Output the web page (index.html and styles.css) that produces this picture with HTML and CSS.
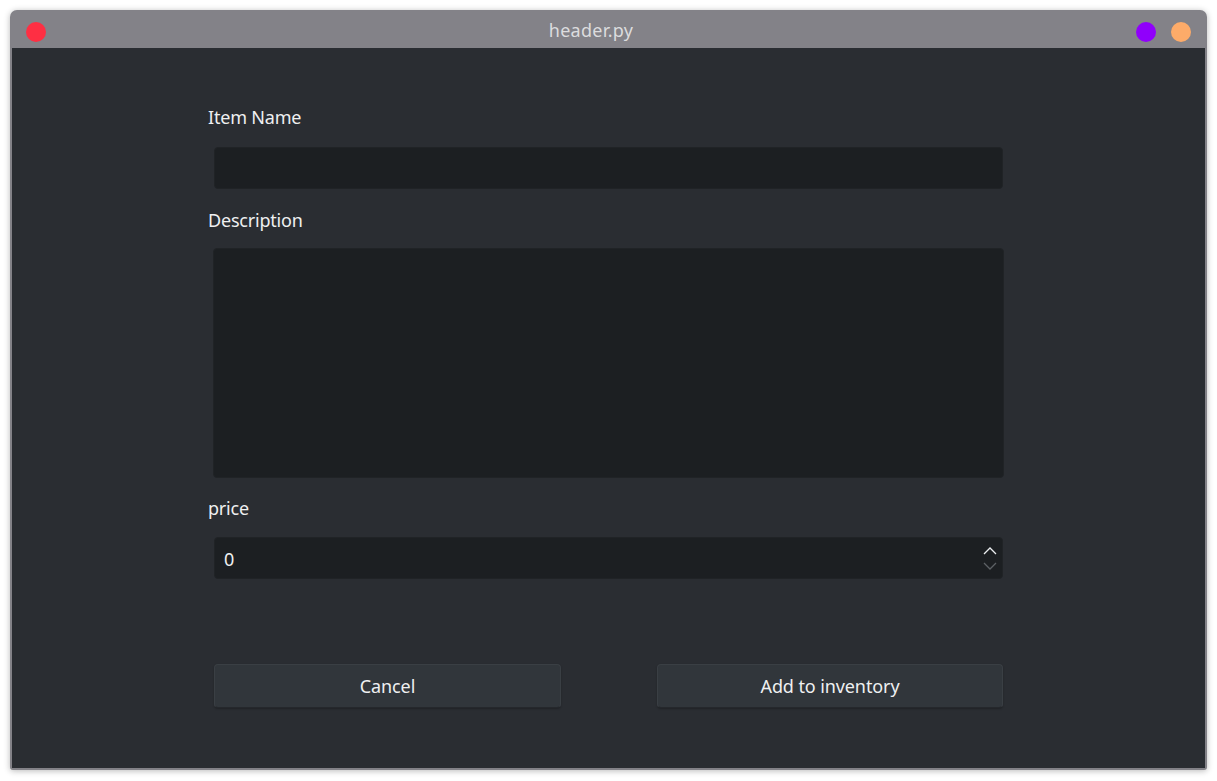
FILE: index.html
```html
<!DOCTYPE html>
<html>
<head>
<meta charset="utf-8">
<link rel="stylesheet" href="styles.css">
</head>
<body>
<div class="window">
  <div class="titlebar">
    <div class="tb-left"><span class="dot red"></span></div>
    <div class="title">header.py</div>
    <div class="tb-right"><span class="dot purple"></span><span class="dot orange"></span></div>
  </div>
  <div class="content">
    <div class="form">
      <label class="label l-name">Item Name</label>
      <div class="field input"></div>
      <label class="label l-desc">Description</label>
      <div class="field textarea"></div>
      <label class="label l-price">price</label>
      <div class="field spin">
        <span class="value">0</span>
        <span class="arrows">
          <svg width="14" height="8" viewBox="0 0 14 8"><path d="M1 7 L7 1 L13 7" fill="none" stroke="#eceff1" stroke-width="1.3"/></svg>
          <svg width="14" height="8" viewBox="0 0 14 8"><path d="M1 1 L7 7 L13 1" fill="none" stroke="#5d6165" stroke-width="1.3"/></svg>
        </span>
      </div>
      <div class="buttons">
        <button class="btn">Cancel</button>
        <button class="btn">Add to inventory</button>
      </div>
    </div>
  </div>
</div>
</body>
</html>
```

FILE: styles.css
```css
html, body {
  margin: 0;
  padding: 0;
  background: #ffffff;
}
body {
  width: 1217px;
  height: 781px;
  font-family: "Noto Sans", "DejaVu Sans", sans-serif;
  overflow: hidden;
}
.window {
  margin: 10px 0 0 10px;
  width: 1197px;
  height: 760px;
  background: #838288;
  border-radius: 7px 7px 3px 3px;
  box-shadow: 0 1px 6px rgba(0,0,0,0.28);
  display: flex;
  flex-direction: column;
}
.titlebar {
  height: 38px;
  display: flex;
  align-items: center;
  flex-shrink: 0;
}
.tb-left {
  width: 50px;
  display: flex;
  padding-left: 16px;
  box-sizing: border-box;
}
.tb-right {
  width: 85px;
  display: flex;
  gap: 15px;
  justify-content: flex-end;
  padding-right: 16px;
  box-sizing: border-box;
}
.title {
  flex: 1;
  text-align: center;
  color: #dcdcde;
  font-size: 18px;
  letter-spacing: 0.3px;
  line-height: 24px;
  padding-top: 1px;
}
.dot {
  width: 20px;
  height: 20px;
  border-radius: 50%;
  display: block;
  margin-top: 5px;
}
.red { background: #fe2f43; }
.purple { background: #9000fb; }
.orange { background: #fdab69; }
.content {
  flex: 1;
  background: #2a2d32;
  margin: 0 2px 2px 2px;
}
.form {
  width: 802px;
  margin-left: 196px;
  padding-top: 57px;
  display: flex;
  flex-direction: column;
}
.label {
  color: #eff0f1;
  font-size: 18px;
  letter-spacing: -0.2px;
  line-height: 24px;
  height: 24px;
}
.field {
  margin: 0 0 0 6px;
  width: 789px;
  box-sizing: border-box;
  background: #1c1f22;
  border: 1px solid #202326;
  border-radius: 4px;
}
.input {
  height: 42px;
  margin-top: 18px;
}
.l-desc { margin-top: 19px; }
.textarea {
  margin-left: 5px;
  width: 791px;
  height: 230px;
  margin-top: 16px;
}
.l-price { margin-top: 18px; }
.spin {
  margin-top: 17px;
  height: 42px;
  display: flex;
  align-items: center;
  justify-content: space-between;
  padding: 0 5px 0 9px;
}
.value {
  color: #eff0f1;
  font-size: 18px;
  line-height: 24px;
  padding-top: 2px;
}
.arrows {
  display: flex;
  flex-direction: column;
  gap: 7px;
  margin-top: 1px;
}
.arrows svg { display: block; }
.buttons {
  margin: 85px 0 0 6px;
  width: 789px;
  display: grid;
  grid-template-columns: 347px 346px;
  column-gap: 96px;
}
.btn {
  height: 44px;
  background: #31363b;
  border: 1px solid #3a3f44;
  border-bottom-color: #25282c;
  border-radius: 4px;
  box-shadow: 0 1px 2px rgba(0,0,0,0.25);
  color: #eff0f1;
  font-family: "Noto Sans", "DejaVu Sans", sans-serif;
  font-size: 18px;
  letter-spacing: -0.1px;
  line-height: 24px;
  padding: 0;
}
```
